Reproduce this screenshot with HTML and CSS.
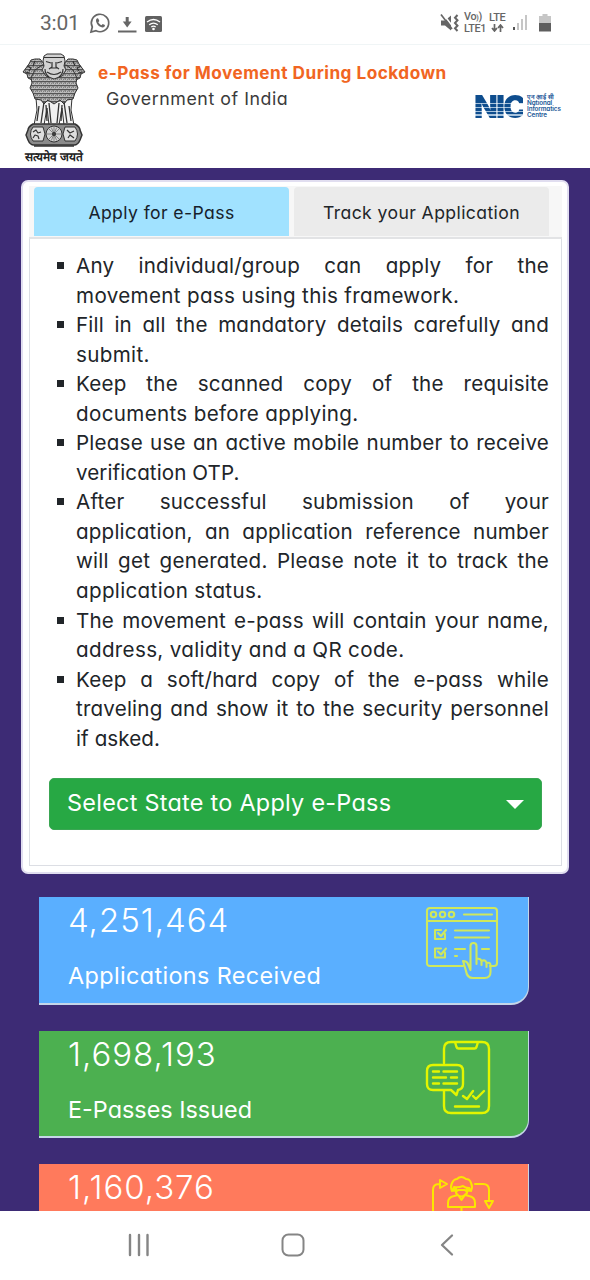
FILE: index.html
```html
<!DOCTYPE html>
<html lang="en">
<head>
<meta charset="utf-8">
<meta name="viewport" content="width=device-width">
<title>e-Pass</title>
<link rel="stylesheet" href="styles.css">
</head>
<body>
<div class="statusbar">
  <span class="clock">3:01</span>
  <svg class="sb-left" width="76" height="22" viewBox="0 0 76 22">
    <g fill="none" stroke="#666" stroke-width="1.7">
      <path d="M2 20l1.3-5A8.7 8.7 0 1 1 7 18.700z"/>
      <path d="M29 19.500h18.500" stroke-width="2"/>
      <path d="M38.200 5v6" stroke-width="3"/>
    </g>
    <path d="M7 8c.5-2 2-2 2.500-1l.8 2-1 1.200c.8 1.500 1.800 2.400 3.200 3l1.200-1.200 2.200 1.100c.4 1.500-1.200 2.400-2.500 2.300C9.600 15 6.800 11 7 8z" fill="#666"/>
    <path d="M33.800 9.500h8.800l-4.400 6z" fill="#666"/>
    <rect x="56" y="4" width="17" height="16" rx="1.500" fill="#616161"/>
    <g fill="none" stroke="#fff" stroke-width="1.300"><path d="M58 10q6.500-5 13 0M60.200 12.700q4.300-3.300 8.600 0M62.300 15q2.200-1.600 4.400 0"/></g>
    <circle cx="64.500" cy="17" r="1.300" fill="#fff"/>
  </svg>
  <svg class="sb-mute" width="20" height="20" viewBox="0 0 20 20">
    <path d="M1 7.500h4l6-5v15l-6-5H1z" fill="#666"/>
    <path d="M2.500 0L14 15" stroke="#fff" stroke-width="1.500"/>
    <path d="M1 1.500L12 16" stroke="#666" stroke-width="1.700"/>
    <path d="M17.500 2l-2.500 2.700 2.500 2.600-2.500 2.700 2.500 2.700-2.500 2.600 2.500 2.700" fill="none" stroke="#666" stroke-width="2"/>
  </svg>
  <span class="net">Vo<b>)</b>)<br>LTE1</span>
  <span class="net net2">LTE
    <svg width="13" height="8" viewBox="0 0 13 8"><path d="M3.500 0v6M1 4l2.500 3L6 4M9.500 8V2M7 4l2.500-3L12 4" fill="none" stroke="#666" stroke-width="1.700"/></svg>
  </span>
  <svg class="sb-signal" width="16" height="17" viewBox="0 0 16 17">
    <path d="M1 13h2v3H1z" fill="#555"/><path d="M5 9h2v7H5zM9 5h2v11H9zM13 1h2v15h-2z" fill="#c6c6c6"/>
  </svg>
  <svg class="sb-batt" width="12" height="18" viewBox="0 0 12 18">
    <path d="M3.500 0h5v2H12v7H0V2h3.500z" fill="#c6c6c6"/><path d="M0 9h12v8.500H0z" fill="#5e5e5e"/>
  </svg>
</div>

<header class="header">
  <div class="emblem">
    <svg width="66" height="95" viewBox="0 0 66 95">
      <defs>
        <pattern id="fur" width="4" height="4" patternUnits="userSpaceOnUse">
          <rect width="4" height="4" fill="#c4c4c4"/>
          <path d="M0 .8l1 1.500L2 .8l1 1.500L4 .8M0 3.500l1-.8M2.500 3.800l.9-1.100" stroke="#333" stroke-width=".8" fill="none"/>
        </pattern>
      </defs>
      <g stroke="#333" stroke-width="1" stroke-linejoin="round">
        <path d="M15 46l1 12-3 15h10l3-17 2 17h10l3-17 2 17h10l-3-15 1-12q-18 7-36 0z" fill="#f1f1f1"/>
        <path d="M14 7l-4 1-2 4-6 8 4 2 1 4 8 4 7-7 2-10-5-6zM52 7l4 1 2 4 6 8-4 2-1 4-8 4-7-7-2-10 5-6z" fill="url(#fur)"/>
        <path d="M21 13l-7 5-4 8 1 5-2 5 3 5 2 6 6 1 3 4 4-4 6 4 6-4 4 4 3-4 6-1 2-6 3-5-2-5 1-5-4-8-7-5z" fill="url(#fur)"/>
        <path d="M23 50l-3 21M28 51l2 20M38 51l-2 20M43 50l3 21M18 54l-2 15M48 54l2 15M25 53l1 16M41 53l-1 16" fill="none" stroke-width="1.300"/>
        <path d="M23 4l3-2h14l3 2 1 5-1 5 2 4-4 6-8 3-8-3-4-6 2-4-1-5z" fill="#d2d2d2"/>
        <path d="M23 5.500h20M25 9.500l5 1.500M41 9.500L36 11M31 10v5l-3 2M35 10v5l3 2M30 16h6M26 20q7 5 14 0M24 17q0 5 4 8M42 17q0 5-4 8M6 14l4 2-2 3M60 14l-4 2 2 3M4 20l5 1M62 20l-5 1M14 9l-2 5M52 9l2 5" fill="none" stroke-width="1.200"/>
        <path d="M12 72h42q5 3 5 6l2 5-2 5q-2 5-6 5H13q-4 0-6-5l-2-5 2-5q0-3 5-6z" fill="#8b8b8b" stroke-width="1.500"/>
        <path d="M12 75h10l2 7-2 7H12q-5-7 0-14zM44 75h10q5 7 0 14H44l-2-7z" fill="#dedede"/>
        <path d="M12 80l3-2 2 3 3-1M12 86l2-3 3 1 1 3M46 78l3 3 4-2M47 86l2-3 4 3" fill="none" stroke-width="1.200"/>
        <circle cx="33" cy="82" r="8" fill="#d5d5d5"/>
        <path d="M33 75v14M26 82h14M28 77l10 10M38 77L28 87M30.300 75.500l5.400 13M35.700 75.500l-5.400 13" stroke-width=".5"/>
        <circle cx="33" cy="82" r="1.500" fill="#444"/>
        <path d="M13 94h40" stroke-width="1.500"/>
      </g>
    </svg>
    <span class="motto">सत्यमेव जयते</span>
  </div>
  <div class="titles">
    <h1 class="title">e-Pass for Movement During Lockdown</h1>
    <p class="subtitle">Government of India</p>
  </div>
  <div class="nic">
    <span class="nic-mark">NIC</span>
    <span class="nic-name"><span class="nic-hi">एन आई सी</span><br>National<br>Informatics<br>Centre</span>
  </div>
</header>

<main class="main">
  <section class="card">
    <nav class="tabs">
      <a class="tab active">Apply for e-Pass</a>
      <a class="tab">Track your Application</a>
    </nav>
    <div class="panel">
      <ul class="rules">
        <li><span class="full">Any individual/group can apply for the</span><span>movement pass using this framework.</span></li>
        <li><span class="full">Fill in all the mandatory details carefully and</span><span>submit.</span></li>
        <li><span class="full">Keep the scanned copy of the requisite</span><span>documents before applying.</span></li>
        <li><span class="full">Please use an active mobile number to receive</span><span class="tight">verification OTP.</span></li>
        <li><span class="full">After successful submission of your</span><span class="full">application, an application reference number</span><span class="full">will get generated. Please note it to track the</span><span>application status.</span></li>
        <li><span class="full">The movement e-pass will contain your name,</span><span>address, validity and a QR code.</span></li>
        <li><span class="full">Keep a soft/hard copy of the e-pass while</span><span class="full">traveling and show it to the security personnel</span><span class="tight">if asked.</span></li>
      </ul>
      <button class="select">Select State to Apply e-Pass<i class="caret"></i></button>
    </div>
  </section>

  <section class="stats">
    <article class="stat blue">
      <div><p class="num">4,251,464</p><p class="label wide">Applications Received</p></div>
      <svg width="74" height="76" viewBox="0 0 74 76" class="ico">
        <g fill="none" stroke="#cfe85c" stroke-width="2.100" stroke-linecap="round" stroke-linejoin="round">
          <path d="M38 61H5q-3 0-3-3V6q0-3 3-3h64q3 0 3 3v52q0 3-3 3h-4M2 16h70M39 9.500h28"/>
          <circle cx="8.500" cy="9.500" r="2.700"/><circle cx="17.500" cy="9.500" r="2.700"/><circle cx="26.500" cy="9.500" r="2.700"/>
          <path d="M16 25h-6v9h10v-5M13 28l3 3 5-6M16 43.500h-6v9h10v-5M13 46.500l3 3 5-6"/>
          <path d="M30 25.500h34M30 32.500h34M30 44h10M57 44h7M30 51h2"/>
          <path d="M45.500 64V41q0-3 3-3t3 3v14M51.500 59v-5q4-1 5 2v4M56.500 56q4-2 5 2v4M61.500 58q4-1 4 2v7q0 6-6 6H48q-6 0-7-7l-3-10q4 0 5 3l2.500 6"/>
        </g>
      </svg>
    </article>
    <article class="stat green">
      <div><p class="num">1,698,193</p><p class="label">E-Passes Issued</p></div>
      <svg width="74" height="76" viewBox="0 0 74 76" class="ico">
        <g fill="none" stroke="#e3f500" stroke-width="2.400" stroke-linecap="round" stroke-linejoin="round">
          <path d="M19 24V10q0-7 7-7h31q7 0 7 7v57q0 7-7 7H26q-7 0-7-7V52M30 3l1.500 5q.5 1.500 2 1.500h16q1.500 0 2-1.500L53 3"/>
          <path d="M8 26h24q6 0 6 6v13q0 5-5 6l-1.500 5L26 51H8q-6 0-6-6V32q0-6 6-6z"/>
          <path d="M8 32.500h6M18.500 32.500H32M8 38.500h13M26 38.500h6M8 44.500h6M18.500 44.500H32"/>
          <path d="M38 57l4 3 6-8M48 57l3 3 8-8M30 67.500h24"/>
        </g>
      </svg>
    </article>
    <article class="stat coral">
      <div><p class="num">1,160,376</p></div>
      <svg width="74" height="76" viewBox="0 0 74 76" class="ico">
        <g fill="none" stroke="#fbe600" stroke-width="2" stroke-linecap="round" stroke-linejoin="round">
          <path d="M8 60V18q0-6 6-6M15 8v8l7-4zM50 12h8q6 0 6 6v10M60 29h8l-4 7z"/>
          <path d="M27 19q-2-4 0-8 2-4 5-4 4-4 9 0 4 0 5 4 2 4 0 8l-2-3q-4 0-6-2-5 2-9 1-1 3-2 4z"/>
          <path d="M29 16v3M44 16v3M31 16v5q5 7 11 0v-5M31 20l2-2h7l2 2M23 35v-4q0-6 6-7l4-1 3.500 5 3.500-5 4 1q6 1 6 7v4zM36.500 35v20"/>
        </g>
      </svg>
    </article>
  </section>
</main>

<footer class="navbar">
  <svg width="24" height="24" viewBox="0 0 24 24"><path d="M3 2v20M12 2v20M20.500 2v20" stroke="#858585" stroke-width="2.400" stroke-linecap="round"/></svg>
  <svg width="24" height="24" viewBox="0 0 24 24"><rect x="1.500" y="1.500" width="21" height="21" rx="6" fill="none" stroke="#858585" stroke-width="2"/></svg>
  <svg width="24" height="24" viewBox="0 0 24 24"><path d="M17 2.500L7 12l10 9.500" fill="none" stroke="#858585" stroke-width="2.300" stroke-linecap="round" stroke-linejoin="round"/></svg>
</footer>
</body>
</html>
```
FILE: styles.css
```css
* { box-sizing: border-box; }
body {
  margin: 0;
  width: 590px;
  height: 1280px;
  overflow: hidden;
  display: flex;
  flex-direction: column;
  background: #fff;
  color: #212529;
  font-family: Inter, "Open Sans", sans-serif;
  font-feature-settings: "cv11";
}
h1, p, ul { margin: 0; padding: 0; }

/* phone status bar */
.statusbar {
  flex: none;
  height: 45px;
  padding: 1px 39px 0 40px;
  display: flex;
  align-items: center;
  border-bottom: 1px solid #f0f5f6;
  color: #666;
}
.clock { width: 49px; font: 21px Roboto, sans-serif; letter-spacing: -.2px; }
.sb-left { flex: none; margin-right: auto; }
.sb-mute { margin-right: 4px; }
.net { width: 25px; font: 500 10.8px/9.500px Roboto, sans-serif; white-space: nowrap; letter-spacing: -.3px; }
.net b { font-size: 7px; }
.net2 { width: 23px; font-size: 11px; letter-spacing: -.4px; display: flex; flex-direction: column; }
.net2 svg { margin: 1px 0 0 2px; }
.sb-signal { margin-right: 11px; }

/* site header */
.header { flex: none; height: 123px; display: flex; padding-left: 21px; }
.emblem { width: 66px; padding-top: 7px; display: flex; flex-direction: column; align-items: center; }
.motto { font-size: 12px; line-height: 14px; margin-top: 3px; color: #222; font-weight: 600; letter-spacing: -.1px; white-space: nowrap; }
.titles { width: 387px; padding: 16px 0 0 11px; }
.title { font-size: 17.2px; line-height: 24px; letter-spacing: .48px; color: #f16522; white-space: nowrap; }
.subtitle { padding-left: 8px; margin-top: 1px; font-size: 17.800px; line-height: 25px; letter-spacing: .54px; color: #3b3b3b; }
.nic { display: flex; padding-top: 46px; height: 80px; gap: 4px; }
.nic-mark {
  width: 49px;
  height: 30px;
  font-size: 31px;
  line-height: 31px;
  font-weight: 900;
  letter-spacing: -1.800px;
  color: transparent;
  background: linear-gradient(#0e4d8e 0 12px, #a7c3dd 12px 13px, #0e4d8e 13px 16px, #a7c3dd 16px 17.500px, #0e4d8e 17.500px 20px, #a7c3dd 20px 21.500px, #0e4d8e 21.500px 23.500px, #a7c3dd 23.500px 25px, #0e4d8e 25px);
  -webkit-background-clip: text;
  background-clip: text;
  white-space: nowrap;
}
.nic-name { padding-top: 3px; font-size: 6.300px; line-height: 6px; font-weight: 600; letter-spacing: -.1px; color: #1b5797; white-space: nowrap; }
.nic-hi { font-size: 6.400px; }

/* page body */
.main { flex: none; height: 1043px; overflow: hidden; background: #3d2b75; padding: 12px 21px 0; }
.card {
  height: 694px;
  background: #fff;
  border: 2px solid #e1def0;
  border-radius: 7px;
  padding: 4px 5px 6px 6px;
}
.tabs {
  height: 53px;
  display: flex;
  gap: 5px;
  padding: 1px 13px 0 5px;
  background: #f7f7f7;
  border-bottom: 2px solid #e2e3e5;
}
.tab {
  width: 255px;
  height: 49px;
  line-height: 51px;
  text-align: center;
  border-radius: 4px 4px 0 0;
  background: #ebebeb;
  font-size: 17.600px;
  letter-spacing: .4px;
  white-space: nowrap;
}
.tab.active { background: #a1e2ff; color: #16212b; }
.panel { height: 627px; border: 1px solid #dcdee4; border-top: 0; padding: 12px 12px 0 19px; }
.rules { list-style: none; font-size: 20.600px; line-height: 29.550px; letter-spacing: .34px; padding-left: 27px; }
.rules li::before {
  content: "";
  float: left;
  width: 7px;
  height: 7px;
  margin: 11px 0 0 -19px;
  background: #212529;
}
.rules span { display: block; white-space: nowrap; }
.rules .full { text-align-last: justify; letter-spacing: .2px; }
.rules .tight { letter-spacing: .08px; }
.select {
  width: 493px;
  height: 52px;
  margin: 25px 0 0;
  padding: 0 17px 3px;
  display: flex;
  align-items: center;
  justify-content: space-between;
  background: #27a844;
  border: 1px solid #3aa653;
  border-radius: 5px;
  color: #fff;
  font: inherit;
  font-feature-settings: inherit;
  font-size: 23.400px;
  letter-spacing: .28px;
}
.caret { margin-top: 3px; border: 9px solid transparent; border-top: 9px solid #fff; border-bottom: 0; }

/* counters */
.stats { padding: 23px 40px 0 18px; display: grid; gap: 26px; }
.stat {
  height: 107.500px;
  display: flex;
  justify-content: space-between;
  padding: 3px 29px 0 29px;
  border-right: 1.500px solid #c5d6e8;
  border-bottom: 2px solid #c5d6e8;
  border-radius: 0 0 18px 0;
  color: #fff;
}
.blue { background: #5aafff; }
.green { background: #4cb050; }
.coral { background: #ff7a5c; }
.num { font-size: 33px; line-height: 40px; font-weight: 300; letter-spacing: .98px; }
.label { font-size: 23.400px; line-height: 36px; margin-top: 18px; }
.label.wide { letter-spacing: .37px; }
.ico { margin-top: 5px; flex: none; }

/* phone navigation bar */
.navbar { flex: none; height: 69px; display: flex; justify-content: space-between; padding: 22px 131px 0 127px; background: #fff; }
```
